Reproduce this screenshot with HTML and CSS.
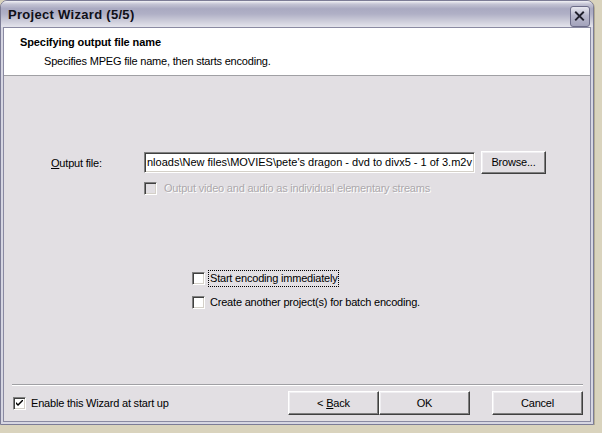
FILE: index.html
```html
<!DOCTYPE html>
<html>
<head>
    <title>Project Wizard (5/5)</title>
    <link rel="stylesheet" href="styles.css">
</head>
<body>
    <div class="window">
        <div class="titlebar">
            <span class="title">Project Wizard (5/5)</span>
            <div class="close-btn">
                <svg width="20" height="21" viewBox="0 0 20 21">
                    <path d="M5.5 5.5 L14.5 14.5 M14.5 5.5 L5.5 14.5" stroke="#20202c" stroke-width="2" fill="none"/>
                </svg>
            </div>
        </div>
        <div class="client">
            <div class="header">
                <div class="header-title">Specifying output file name</div>
                <div class="header-sub">Specifies MPEG file name, then starts encoding.</div>
            </div>

            <div class="main">
                <div class="file-row">
                    <label class="file-label"><u>O</u>utput file:</label>
                    <div class="textbox">nloads\New files\MOVIES\pete's dragon - dvd to divx5 - 1 of 3.m2v</div>
                    <div class="btn browse-btn">Browse...</div>
                </div>
                <div class="check-row split-row">
                    <span class="checkbox disabled"></span>
                    <span class="check-text disabled-text">Output video and audio as individual elementary streams</span>
                </div>

                <div class="options">
                    <div class="check-row">
                        <span class="checkbox"></span>
                        <span class="check-text focused">Start encoding immediately</span>
                    </div>
                    <div class="check-row">
                        <span class="checkbox"></span>
                        <span class="check-text">Create another project(s) for batch encoding.</span>
                    </div>
                </div>
            </div>

            <div class="footer">
                <div class="separator"></div>
                <div class="footer-row">
                    <div class="check-row startup-row">
                        <span class="checkbox">
                            <svg width="7" height="7" viewBox="0 0 7 7">
                                <path d="M0 2 L0 4 L2 6 L7 1 L7 -1 L2 4 Z" fill="#000"/>
                            </svg>
                        </span>
                        <span class="check-text">Enable this Wizard at start up</span>
                    </div>
                    <div class="nav-buttons">
                        <div class="btn nav-btn">&lt;&nbsp; <u>B</u>ack</div>
                        <div class="btn nav-btn">OK</div>
                        <div class="btn nav-btn cancel-btn">Cancel</div>
                    </div>
                </div>
            </div>
        </div>
    </div>
</body>
</html>
```

FILE: styles.css
```css
body {
    margin: 0;
    background: #d9d3bd;
    font-family: "Liberation Sans", Arial, sans-serif;
    font-size: 11px;
    letter-spacing: -0.2px;
    color: #000;
}
.window {
    width: 594px;
    height: 425px;
    box-sizing: border-box;
    border: 1px solid #7c7c96;
    border-radius: 7px 7px 0 0;
    background: #d6d6e2;
    padding: 0 2px 2px;
    display: flex;
    flex-direction: column;
    box-shadow: 1px 1px 0 #b3ac94;
}
.titlebar {
    height: 26px;
    margin: 0 -2px;
    padding: 0 3px 0 7px;
    display: flex;
    align-items: flex-start;
    justify-content: space-between;
    border-radius: 6px 6px 0 0;
    background: linear-gradient(to bottom, #f2f2f6 0%, #c4c4d4 12%, #a9a9c1 30%, #b0b0c6 50%, #cacad8 75%, #e4e4ec 100%);
}
.title {
    font-weight: bold;
    font-size: 13px;
    letter-spacing: 0.3px;
    line-height: 26px;
    padding-top: 1px;
    color: #101018;
}
.close-btn {
    width: 20px;
    height: 21px;
    margin-top: 5px;
    box-sizing: border-box;
    border: 1px solid #6c6c88;
    border-radius: 3px;
    background: linear-gradient(to bottom, #e8e8f0 0%, #b8b8cc 45%, #a4a4bc 100%);
    display: flex;
    align-items: center;
    justify-content: center;
}
.close-btn svg {
    margin: -1px 0 0 -1px;
}
.client {
    flex: 1;
    border: 1px solid #8a8aa2;
    background: #e2dfe3;
    display: flex;
    flex-direction: column;
}
.header {
    height: 48px;
    box-sizing: border-box;
    background: #fff;
    border-bottom: 1px solid #a0a0a4;
    padding: 8px 0 0 16px;
}
.header-title {
    font-weight: bold;
    line-height: 13px;
    letter-spacing: -0.1px;
}
.header-sub {
    line-height: 13px;
    margin-top: 6px;
    padding-left: 24px;
}
.main {
    flex: 1;
}
.file-row {
    display: flex;
    align-items: center;
    height: 24px;
    margin-top: 74px;
    padding-left: 47px;
}
.file-label {
    width: 93px;
    padding-top: 1px;
}
.textbox {
    width: 331px;
    height: 21px;
    box-sizing: border-box;
    background: #fff;
    border: 1px solid;
    border-color: #808080 #fff #fff #808080;
    box-shadow: inset 1px 1px #404040, inset -1px -1px #d4d0c8;
    padding: 0 2px;
    line-height: 19px;
    letter-spacing: 0;
    white-space: nowrap;
    overflow: hidden;
}
.btn {
    box-sizing: border-box;
    border: 1px solid;
    border-color: #fff #404040 #404040 #fff;
    box-shadow: inset -1px -1px #808080, inset 1px 1px #f0eff2;
    background: #e2dfe3;
    display: flex;
    align-items: center;
    justify-content: center;
}
.browse-btn {
    width: 65px;
    height: 23px;
    margin-left: 6px;
}
.check-row {
    display: flex;
    align-items: center;
    height: 17px;
}
.split-row {
    margin-top: 6px;
    padding-left: 140px;
}
.checkbox {
    width: 13px;
    height: 13px;
    box-sizing: border-box;
    border: 1px solid;
    border-color: #808080 #fff #fff #808080;
    box-shadow: inset 1px 1px #404040, inset -1px -1px #d4d0c8;
    background: #fff;
    display: flex;
    align-items: center;
    justify-content: center;
}
.checkbox.disabled {
    background: #e2dfe3;
}
.check-text {
    margin-left: 6px;
    line-height: 15px;
    padding: 0 1px;
}
.disabled-text {
    color: #aca8ac;
    text-shadow: 1px 1px 0 #fff;
}
.focused {
    outline: 1px dotted #000;
    outline-offset: 0;
    margin-left: 4px;
}
.options {
    margin-top: 73px;
    padding-left: 188px;
    display: flex;
    flex-direction: column;
    gap: 7px;
}
.options .check-row:last-child .check-text {
    margin-left: 4px;
}
.footer {
    padding: 0 7px 6px 8px;
}
.separator {
    border-top: 1px solid #a0a0a4;
    border-bottom: 1px solid #fff;
}
.footer-row {
    display: flex;
    justify-content: space-between;
    align-items: center;
    margin-top: 5px;
    height: 24px;
}
.startup-row {
    padding-left: 1px;
}
.startup-row .check-text {
    margin-left: 4px;
}
.nav-buttons {
    display: flex;
}
.nav-btn {
    width: 91px;
    height: 24px;
}
.cancel-btn {
    margin-left: 22px;
}
```
